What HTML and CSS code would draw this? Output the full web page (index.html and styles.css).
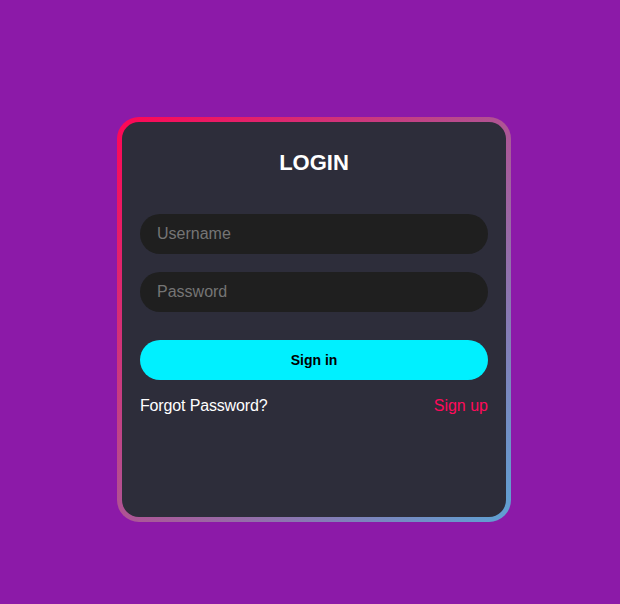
FILE: index.html
```html
<!DOCTYPE html>
<html>
<head>
<meta charset="utf-8">
<link rel="stylesheet" href="styles.css">
</head>
<body>
<div class="page">
  <div class="card-border">
    <div class="card">
      <h1 class="title">LOGIN</h1>
      <div class="field"><span class="placeholder">Username</span></div>
      <div class="field field-gap"><span class="placeholder">Password</span></div>
      <div class="btn">Sign in</div>
      <div class="links">
        <span class="forgot">Forgot Password?</span>
        <span class="signup">Sign up</span>
      </div>
    </div>
  </div>
</div>
</body>
</html>
```
FILE: styles.css
```css
html, body {
  margin: 0;
  padding: 0;
}
body {
  background: #8c1aa8;
  font-family: "Liberation Sans", Arial, sans-serif;
  width: 620px;
  height: 604px;
  overflow: hidden;
}
.page {
  padding: 117px 0 0 117px;
}
.card-border {
  width: 384px;
  height: 395px;
  padding: 5px;
  border-radius: 22px;
  background: linear-gradient(to bottom right, #ff0654, #5ea2d4);
}
.card {
  box-sizing: border-box;
  width: 384px;
  height: 395px;
  border-radius: 17px;
  background: #2d2d3a;
  padding: 28px 18px 0 18px;
  display: flex;
  flex-direction: column;
}
.title {
  margin: 0 0 39px 0;
  font-size: 22px;
  line-height: 25px;
  font-weight: bold;
  color: #ffffff;
  text-align: center;
}
.field {
  height: 40px;
  border-radius: 20px;
  background: #1f1f1f;
  display: flex;
  align-items: center;
  padding-left: 17px;
}
.field-gap {
  margin-top: 18px;
}
.placeholder {
  color: #757575;
  font-size: 16px;
}
.btn {
  margin-top: 28px;
  height: 40px;
  border-radius: 20px;
  background: #00f0ff;
  color: #000000;
  font-weight: bold;
  font-size: 14px;
  display: flex;
  align-items: center;
  justify-content: center;
}
.links {
  margin-top: 17px;
  display: flex;
  justify-content: space-between;
  font-size: 16px;
  line-height: 18px;
}
.forgot {
  color: #ffffff;
  letter-spacing: -0.15px;
}
.signup {
  color: #ff0a5a;
}
```
